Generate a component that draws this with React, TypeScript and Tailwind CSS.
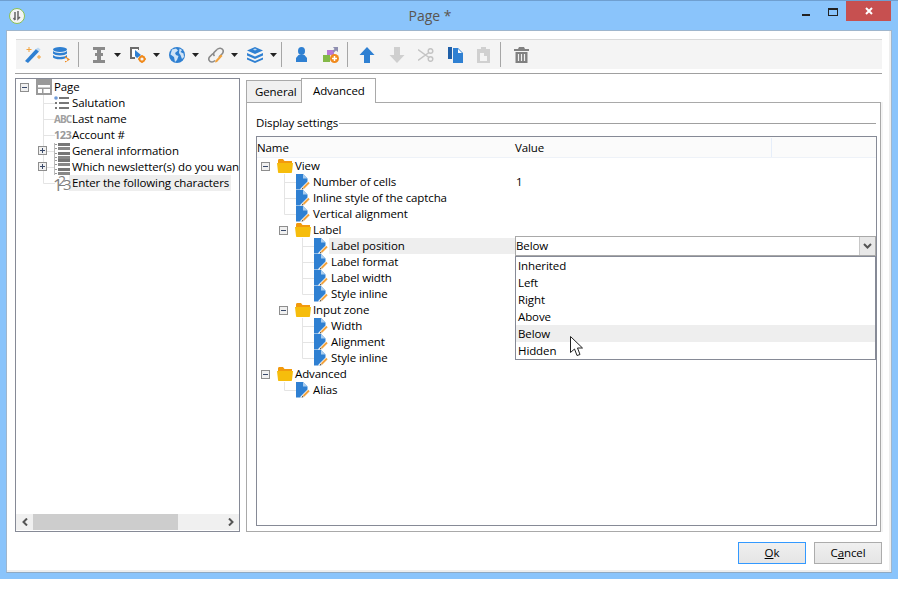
import React from "react";

const Connector = ({ last = false }: { last?: boolean }) => (
  <svg width="12" height="16" className="shrink-0">
    <path d={last ? "M0.5 0V8.5H12" : "M0.5 0V16M0.5 8.5H12"} stroke="#e4e4e4" fill="none" />
  </svg>
);

const Expander = ({ open = true }: { open?: boolean }) => (
  <svg width="9" height="9" className="shrink-0">
    <rect x="0.5" y="0.5" width="8" height="8" fill="#f0f0f0" stroke="#8e8e8e" />
    <path d={open ? "M2 4.5H7" : "M2 4.5H7M4.5 2V7"} stroke="#3a4a6a" />
  </svg>
);

const Folder = () => (
  <svg width="16" height="14" viewBox="0 0 16 14" className="shrink-0">
    <path d="M1 1.5C1 .7 1.5 0 2.5 0H6L7.5 2H15V5H1Z" fill="#f29a0d" />
    <path d="M0 4H16L15 13C15 13.6 14.5 14 14 14H2C1.500 14 1 13.6 1 13Z" fill="#f6bd0c" />
  </svg>
);

const LeafIcon = () => (
  <svg width="14" height="16" viewBox="0 0 14 16" className="shrink-0">
    <path d="M0 0H7L11.500 4.500V7.500L4.500 14.500V15.500H0Z" fill="#2f80d2" />
    <path d="M7 0L11.500 4.500H7Z" fill="#a9cdef" />
    <path d="M7.500 14L13 8.500" stroke="#f2a23c" strokeWidth="2" />
    <path d="M5.500 15.800L6.300 13.500L7.800 15Z" fill="#6a5a40" />
  </svg>
);

const ListIcon = () => (
  <svg width="16" height="16" viewBox="0 0 16 16" className="shrink-0">
    <circle cx="2" cy="3" r="1.800" fill="#6f9bd8" />
    <rect x="5" y="2" width="10" height="2" fill="#777" />
    <rect x="1" y="7" width="2" height="2" fill="#777" />
    <rect x="5" y="7" width="10" height="2" fill="#777" />
    <rect x="1" y="12" width="2" height="2" fill="#777" />
    <rect x="5" y="12" width="10" height="2" fill="#777" />
  </svg>
);

const PageIcon = () => (
  <svg width="16" height="16" viewBox="0 0 16 16" className="shrink-0">
    <rect width="16" height="16" fill="#9a9a9a" />
    <rect x="2" y="6" width="12" height="2.500" fill="#fff" />
    <rect x="2" y="10" width="4" height="4" fill="#fff" />
    <rect x="7.500" y="10" width="6.500" height="4" fill="#fff" />
  </svg>
);

const GroupIcon = () => (
  <svg width="16" height="16" viewBox="0 0 16 16" className="shrink-0">
    <rect x="0" y="0" width="1" height="16" fill="#bbb" />
    <rect x="1" y="1" width="2" height="1" fill="#999" />
    <rect x="1" y="5" width="2" height="1" fill="#999" />
    <rect x="1" y="10" width="2" height="1" fill="#999" />
    <rect x="1" y="14" width="2" height="1" fill="#999" />
    <rect x="4" y="0" width="12" height="3" fill="#777" />
    <rect x="4" y="4" width="12" height="3" fill="#888" />
    <rect x="4" y="9" width="12" height="3" fill="#777" />
    <rect x="4" y="13" width="12" height="3" fill="#888" />
  </svg>
);

const Wand = () => (
  <svg width="18" height="18" viewBox="0 0 18 18">
    <path d="M1 15L12 3L15 5.500L4 17Z" fill="#2f80d2" />
    <path d="M12 3L15 5.500L16.500 3.500L14 1.500Z" fill="#bcd8f2" />
    <path d="M5 1V6M2.500 3.500H7.500" stroke="#f2a23c" />
    <path d="M15 9V13M13 11H17" stroke="#f2a23c" />
  </svg>
);

const Db = () => (
  <svg width="18" height="16" viewBox="0 0 18 16">
    <ellipse cx="7" cy="2.500" rx="7" ry="2.500" fill="#2f80d2" />
    <path d="M0 4C2 6.500 12 6.500 14 4V6.500C12 9 2 9 0 6.500Z" fill="#2f80d2" />
    <path d="M0 8C2 10.500 12 10.500 14 8V10C12 13 2 13 0 10.500Z" fill="#2f80d2" />
    <path d="M8 14H13C14 12 13 11 11 11V9L16 12.500L11 15.500V14Z" fill="#f08a1d" transform="translate(1 0)" />
  </svg>
);

const IBeam = () => (
  <svg width="16" height="16" viewBox="0 0 16 16">
    <path d="M2 0H14V3H10V6H12V9H10V13H14V16H2V13H6V9H4V6H6V3H2Z" fill="#8a8a8a" />
  </svg>
);

const ParamTool = () => (
  <svg width="16" height="16" viewBox="0 0 16 16">
    <path d="M0 0H9V3L5 3L5 12H0Z" fill="#6c6c6c" />
    <path d="M2 2H8V3H5V10H2Z" fill="#fff" />
    <path d="M5 3L11 8L7 11L5 9Z" fill="#2f80d2" />
    <circle cx="12" cy="12" r="2.500" fill="none" stroke="#f08a1d" strokeWidth="1.800" />
    <path d="M12 8V9.500M12 14.500V16M8 12H9.500M14.500 12H16" stroke="#f08a1d" strokeWidth="1.500" />
  </svg>
);

const Globe = () => (
  <svg width="16" height="16" viewBox="0 0 16 16">
    <circle cx="8" cy="8" r="8" fill="#2f80d2" />
    <path d="M3 2.500L7 1.500L9 3.500L6 6L7 8L9.500 9L8 13L6 15L5 10L1.500 7.500Z" fill="#cfe3f6" />
    <path d="M10.500 1.500L13 3L11.500 5L14.500 6.500L15 10L13 12L11.500 8L10 6Z" fill="#cfe3f6" />
  </svg>
);

const LinkIcon = () => (
  <svg width="16" height="16" viewBox="0 0 16 16" fill="none">
    <path d="M9 2.500C11 .5 14 1 15 3C15.500 4.500 15 6 14 7L11 10" stroke="#8a8a8a" strokeWidth="1.600" />
    <path d="M9 2.500L6 5.500C5 7 5.500 8 6.500 9" stroke="#8a8a8a" strokeWidth="1.600" />
    <path d="M5 6.500L1.500 10C0 12 1 15 4 15C5 15 6 14.500 7 13.500" stroke="#8a8a8a" strokeWidth="1.600" />
    <path d="M7 15.500L7.500 13.500L13 7.500L14.500 9L9 15Z" fill="#f2a23c" />
  </svg>
);

const Stack = () => (
  <svg width="16" height="16" viewBox="0 0 16 16">
    <path d="M8 0L16 3.500L8 7L0 3.500Z" fill="#2f80d2" />
    <path d="M6 2.500L8 1.500L10 2.500L8 3.500Z" fill="#bcd8f2" />
    <path d="M0 6L8 9.500L16 6V8.500L8 12L0 8.500Z" fill="#2f80d2" />
    <path d="M0 10.500L8 14L16 10.500V12.500L8 16L0 12.500Z" fill="#2f80d2" />
  </svg>
);

const Person = () => (
  <svg width="11" height="15" viewBox="0 0 11 15">
    <ellipse cx="5.500" cy="4" rx="3.500" ry="4" fill="#2f80d2" />
    <path d="M2.500 8H8.500L11 11V15H0V11Z" fill="#2f80d2" />
  </svg>
);

const Shapes = () => (
  <svg width="16" height="16" viewBox="0 0 16 16">
    <rect x="4" y="3" width="7" height="5" fill="#b879d6" />
    <path d="M10 0H15V5L13 3.500L11 5.500L9.500 4L11.500 2Z" fill="#8f8fb0" />
    <rect x="0" y="8" width="7" height="7" fill="#84b848" />
    <circle cx="11.500" cy="11.500" r="4.500" fill="#f08a1d" />
    <path d="M9 11.500H14M11.500 9V14" stroke="#fff" strokeWidth="1.500" />
  </svg>
);

const Arrow = ({ color, down = false }: { color: string; down?: boolean }) => (
  <svg width="16" height="16" viewBox="0 0 16 16">
    <path d={down ? "M5 0H11V8H15.500L8 16L.5 8H5Z" : "M8 0L15.500 8H11V16H5V8H.5Z"} fill={color} />
  </svg>
);

const Scissors = () => (
  <svg width="16" height="14" viewBox="0 0 16 14" fill="none" stroke="#c4c4c4">
    <circle cx="12.500" cy="3" r="2.300" strokeWidth="1.500" />
    <circle cx="12.500" cy="11" r="2.300" strokeWidth="1.500" />
    <path d="M0 1.500L11 9.500M0 12.500L11 4.500" strokeWidth="1.500" />
  </svg>
);

const Copy = () => (
  <svg width="15" height="16" viewBox="0 0 15 16">
    <path d="M0 0H4V12H0Z" fill="#1f5fa8" />
    <path d="M5 1H10L15 6V16H5Z" fill="#2f80d2" />
    <path d="M10 2V6H14Z" fill="#fff" />
  </svg>
);

const Paste = () => (
  <svg width="13" height="16" viewBox="0 0 13 16">
    <path d="M0 2H4V0H9V2H13V16H0Z" fill="#d0d0d0" />
    <rect x="3" y="6" width="7" height="8" fill="#f4f4f4" />
    <path d="M7 6H10V9H7Z" fill="#d0d0d0" />
  </svg>
);

const Trash = () => (
  <svg width="15" height="16" viewBox="0 0 15 16">
    <path d="M5 0H10L11 2H15V4H0V2H4Z" fill="#808080" />
    <path d="M1.500 5H13.500V16H1.500Z" fill="#808080" />
    <path d="M4.500 7V14M7.500 7V14M10.500 7V14" stroke="#f0f0f0" strokeWidth="1.200" />
  </svg>
);

const Caret = () => (
  <svg width="7" height="4" className="shrink-0">
    <path d="M0 0H7L3.500 4Z" fill="#222" />
  </svg>
);

const Sep = ({ className }: { className: string }) => <div className={`w-px h-[25px] bg-[#a6a6a6] ${className}`} />;

const DropTool = ({ children }: { children: React.ReactNode }) => (
  <div className="w-[39px] h-full flex items-center pl-[11px] gap-[7px]">
    <div className="w-[16px] flex justify-center">{children}</div>
    <Caret />
  </div>
);

const Tool = ({ className, children }: { className: string; children: React.ReactNode }) => (
  <div className={`w-[16px] flex justify-center ${className}`}>{children}</div>
);

const Toolbar = () => (
  <div className="ml-[9px] w-[866px] h-[30px] mt-[8px] bg-[#f4f4f4] border-t border-[#dadada] flex items-center pl-[2px]">
    <div className="w-[30px] flex justify-center">
      <Wand />
    </div>
    <div className="w-[28px] flex justify-center">
      <Db />
    </div>
    <Sep className="ml-[2px] mr-px" />
    <DropTool>
      <IBeam />
    </DropTool>
    <DropTool>
      <ParamTool />
    </DropTool>
    <DropTool>
      <Globe />
    </DropTool>
    <DropTool>
      <LinkIcon />
    </DropTool>
    <DropTool>
      <Stack />
    </DropTool>
    <Sep className="ml-[6px]" />
    <Tool className="ml-[11px]">
      <Person />
    </Tool>
    <Tool className="ml-[14px]">
      <Shapes />
    </Tool>
    <Sep className="ml-[8px]" />
    <Tool className="ml-[11px]">
      <Arrow color="#2f80d2" />
    </Tool>
    <Tool className="ml-[14px]">
      <Arrow color="#cfcfcf" down />
    </Tool>
    <Tool className="ml-[13px]">
      <Scissors />
    </Tool>
    <Tool className="ml-[13px]">
      <Copy />
    </Tool>
    <Tool className="ml-[12px]">
      <Paste />
    </Tool>
    <Sep className="ml-[9px]" />
    <Tool className="ml-[12px]">
      <Trash />
    </Tool>
  </div>
);

const SideRow = ({
  icon,
  label,
  last = false,
  expandable = false,
  highlight = false,
}: {
  icon: React.ReactNode;
  label: string;
  last?: boolean;
  expandable?: boolean;
  highlight?: boolean;
}) => (
  <div className="relative h-4 flex items-center pl-[27px] whitespace-nowrap">
    <Connector last={last} />
    <div className="-ml-px">{icon}</div>
    <span className={`leading-4 ${highlight ? "bg-[#eeeeee] -ml-[1px] pl-[3px] pr-[2px]" : "ml-[2px]"}`}>{label}</span>
    {expandable && (
      <div className="absolute left-[22px] top-[3px] flex">
        <Expander open={false} />
      </div>
    )}
  </div>
);

const SideTree = () => (
  <div className="w-[225px] border border-[#868a96] flex flex-col overflow-hidden">
    <div className="flex-1 overflow-hidden">
      <div className="h-4 flex items-center pl-[4px]">
        <Expander />
        <div className="ml-[7px]">
          <PageIcon />
        </div>
        <span className="ml-[2px] leading-4">Page</span>
      </div>
      <SideRow icon={<ListIcon />} label="Salutation" />
      <SideRow
        icon={<span className="block w-[16px] text-[10px] leading-4 font-bold text-[#a0a0a0] tracking-[-0.9px]">ABC</span>}
        label="Last name"
      />
      <SideRow
        icon={<span className="block w-[16px] text-[11px] leading-4 font-bold text-[#999] tracking-[-0.6px]">123</span>}
        label="Account #"
      />
      <SideRow icon={<GroupIcon />} label="General information" expandable />
      <SideRow icon={<GroupIcon />} label="Which newsletter(s) do you want to receive" expandable />
      <SideRow
        last
        highlight
        icon={
          <span className="block relative w-[16px] h-4 text-[#808080]">
            <span className="absolute -left-[1px] top-[1.500px] text-[17px] leading-4">1</span>
            <span className="absolute left-[4px] -top-[2px] text-[14px] leading-4">2</span>
            <span className="absolute left-[9px] top-[0.500px] text-[15px] leading-4">3</span>
          </span>
        }
        label="Enter the following characters"
      />
    </div>
    <div className="h-[16px] mb-[1px] bg-[#f0f0f0] flex items-center">
      <div className="w-[17px] flex justify-center">
        <svg width="6" height="8">
          <path d="M5 .5L1.500 4L5 7.500" stroke="#555" strokeWidth="2" fill="none" />
        </svg>
      </div>
      <div className="w-[145px] h-full bg-[#cdcdcd]" />
      <div className="flex-1" />
      <div className="w-[17px] flex justify-center">
        <svg width="6" height="8">
          <path d="M1 .5L4.500 4L1 7.500" stroke="#555" strokeWidth="2" fill="none" />
        </svg>
      </div>
    </div>
  </div>
);

const GridRow = ({
  level,
  kind,
  label,
  value,
  last = false,
  highlight = false,
}: {
  level: 0 | 1 | 2;
  kind: "group" | "leaf";
  label: string;
  value?: string;
  last?: boolean;
  highlight?: boolean;
}) => {
  const indent =
    kind === "group"
      ? level === 0
        ? "pl-[4px]"
        : "pl-[22px]"
      : level === 1
        ? "pl-[27px]"
        : "pl-[45px]";
  return (
    <div className="h-4 flex whitespace-nowrap">
      <div className={`w-[258px] flex items-center ${indent}`}>
        {kind === "group" ? (
          <>
            <Expander />
            <div className="ml-[7px]">
              <Folder />
            </div>
          </>
        ) : (
          <>
            <Connector last={last} />
            <LeafIcon />
            <div className="w-[1px]" />
          </>
        )}
        <span className={`flex-1 leading-4 pl-[2px] ${highlight ? "bg-[#eeeeee]" : ""}`}>{label}</span>
      </div>
      <div className="pl-px leading-4">{value}</div>
    </div>
  );
};

const Grid = () => (
  <div className="relative flex-1 border border-[#868a96] mb-[5px]">
    <div className="h-[21px] bg-[#fbfbfb] border-b border-[#eef2f8] flex items-center pt-px">
      <div className="w-[258px]">Name</div>
      <div className="w-[257px] h-full flex items-center border-r border-[#e6eefa]">Value</div>
    </div>
    <GridRow level={0} kind="group" label="View" />
    <GridRow level={1} kind="leaf" label="Number of cells" value="1" />
    <GridRow level={1} kind="leaf" label="Inline style of the captcha" />
    <GridRow level={1} kind="leaf" label="Vertical alignment" last />
    <GridRow level={1} kind="group" label="Label" />
    <GridRow level={2} kind="leaf" label="Label position" highlight />
    <GridRow level={2} kind="leaf" label="Label format" />
    <GridRow level={2} kind="leaf" label="Label width" />
    <GridRow level={2} kind="leaf" label="Style inline" last />
    <GridRow level={1} kind="group" label="Input zone" />
    <GridRow level={2} kind="leaf" label="Width" />
    <GridRow level={2} kind="leaf" label="Alignment" />
    <GridRow level={2} kind="leaf" label="Style inline" last />
    <GridRow level={0} kind="group" label="Advanced" />
    <GridRow level={1} kind="leaf" label="Alias" last />

    <div className="absolute left-[258px] right-0 top-[99px] h-[20px] bg-white border border-[#a9a9a9] flex items-center">
      <span className="flex-1">Below</span>
      <div className="w-[16px] h-full bg-[#e8e8e8] border-l border-[#c8c8c8] flex items-center justify-center">
        <svg width="9" height="6">
          <path d="M1 1L4.500 4.500L8 1" stroke="#555" strokeWidth="2" fill="none" />
        </svg>
      </div>
    </div>
    <div className="absolute left-[258px] right-0 top-[119px] bg-white border border-[#868a96]">
      {["Inherited", "Left", "Right", "Above", "Below", "Hidden"].map((item) => (
        <div key={item} className={`h-[17px] leading-[17px] pl-[2px] ${item === "Below" ? "bg-[#eeeeee]" : ""}`}>
          {item}
        </div>
      ))}
    </div>
    <svg width="14" height="21" viewBox="0 0 14 21" className="absolute left-[313px] top-[199px]">
      <path d="M.5.5V16.500L4.500 13L7 19.500L10 18.500L7.500 12H12.500Z" fill="#fff" stroke="#222" />
    </svg>
  </div>
);

const TabPanel = () => (
  <div className="w-[635px] ml-[6px] flex flex-col">
    <div className="h-[25px] flex items-end relative z-10">
      <div className="w-[56px] h-[22px] bg-[#f0f0f0] border border-[#a9a9a9] border-b-0 pl-[8px] leading-[21px] mb-px">General</div>
      <div className="w-[75px] h-[25px] bg-white border border-[#a9a9a9] border-b-0 -ml-px pl-[11px] leading-[24px]">Advanced</div>
    </div>
    <div className="flex-1 -mt-px border border-[#a9a9a9] shadow-[2px_0_0_#f4f4f4] pl-[9px] pr-[3px] flex flex-col">
      <div className="h-[16px] mt-[12px] mb-[5px] flex items-center pr-px">
        <span className="leading-4">Display settings</span>
        <div className="flex-1 h-px bg-[#a0a0a0] ml-[1px]" />
      </div>
      <Grid />
    </div>
  </div>
);

const DialogButton = ({ primary = false, children }: { primary?: boolean; children: React.ReactNode }) => (
  <div
    className={`w-[68px] h-[22px] flex items-center justify-center bg-gradient-to-b from-[#f0f0f0] to-[#e5e5e5] border ${
      primary ? "border-[#3399ff]" : "border-[#acacac]"
    }`}
  >
    <span>{children}</span>
  </div>
);

export default function App() {
  return (
    <div className="w-[912px] h-[591px] bg-white overflow-hidden text-[11.5px] tracking-[-0.1px] text-black font-['Open_Sans',sans-serif]">
      <div className="w-[898px] h-[579px] bg-[#8ac4fb] border-t border-[#6f9fd0] flex flex-col">
        <div className="h-[29px] flex items-start shrink-0">
          <div className="w-[32px] pl-[9px] pt-[7px]">
            <svg width="16" height="16" viewBox="0 0 16 16">
              <circle cx="8" cy="8" r="7.500" fill="#f4f4f4" stroke="#8cc152" />
              <path d="M6 4V12M9 3V11L11 9M6 12L4.500 10" stroke="#666" strokeWidth="1.500" fill="none" />
            </svg>
          </div>
          <div className="flex-1 text-center text-[14px] tracking-normal leading-[30px] text-[#5a5550] pl-[26px]">Page *</div>
          <div className="w-[96px] flex items-start">
            <div className="w-[8px] h-[2px] mt-[13px] bg-[#222]" />
            <div className="w-[10px] h-[8px] mt-[7px] ml-[18px] border border-t-2 border-[#222]" />
            <div className="w-[45px] h-[20px] ml-[8px] bg-[#c75050] flex items-center justify-center">
              <svg width="8" height="8">
                <path d="M1 1L7 7M7 1L1 7" stroke="#fff" strokeWidth="2" />
              </svg>
            </div>
          </div>
        </div>
        <div className="mx-[6px] h-[543px] bg-white border border-[#9fb6cd] border-b-[#8fa9c2] shadow-[inset_-2px_-2px_0_#eeeeee] flex flex-col">
          <Toolbar />
          <div className="ml-[8px] w-[867px] h-px bg-[#a0a0a0] mt-[4px]" />
          <div className="flex ml-[8px] mt-[4px] h-[454px]">
            <SideTree />
            <TabPanel />
          </div>
          <div className="flex justify-end gap-[8px] pr-[9px] mt-[10px]">
            <DialogButton primary>
              <u>O</u>k
            </DialogButton>
            <DialogButton>
              C<u>a</u>ncel
            </DialogButton>
          </div>
        </div>
      </div>
    </div>
  );
}
